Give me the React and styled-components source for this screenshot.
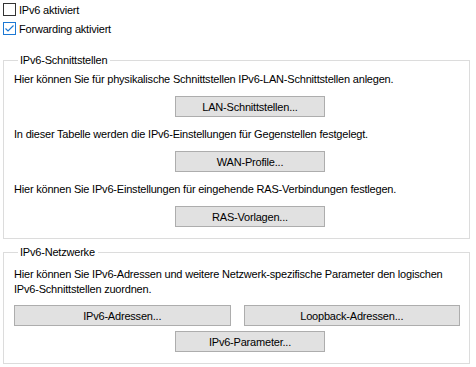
import React, { useState } from "react";
import styled, { createGlobalStyle } from "styled-components";

const GlobalStyle = createGlobalStyle`
  html, body {
    margin: 0;
    padding: 0;
    background: #ffffff;
  }
  body {
    font-family: "Liberation Sans", Arial, sans-serif;
    font-size: 11px;
    letter-spacing: -0.2px;
    color: #000000;
  }
`;

function CheckBox({ checked, onToggle, children }) {
  return (
    <CheckRow onClick={onToggle}>
      <Box checked={checked}>
        {checked && (
          <svg width="11" height="11" viewBox="0 0 11 11">
            <path d="M1.5 5.5 L4 8 L9.5 2.5" fill="none" stroke="#1c78d4" strokeWidth="1.2" />
          </svg>
        )}
      </Box>
      <span>{children}</span>
    </CheckRow>
  );
}

export default function App() {
  const [ipv6, setIpv6] = useState(false);
  const [forwarding, setForwarding] = useState(true);

  return (
    <Page>
      <GlobalStyle />
      <Checks>
        <CheckBox checked={ipv6} onToggle={() => setIpv6(!ipv6)}>
          IPv6 aktiviert
        </CheckBox>
        <CheckBox checked={forwarding} onToggle={() => setForwarding(!forwarding)}>
          Forwarding aktiviert
        </CheckBox>
      </Checks>

      <Group>
        <Legend>IPv6-Schnittstellen</Legend>
        <Text>Hier können Sie für physikalische Schnittstellen IPv6-LAN-Schnittstellen anlegen.</Text>
        <ButtonRow>
          <Button>LAN-Schnittstellen...</Button>
        </ButtonRow>
        <Text>In dieser Tabelle werden die IPv6-Einstellungen für Gegenstellen festgelegt.</Text>
        <ButtonRow>
          <Button>WAN-Profile...</Button>
        </ButtonRow>
        <Text>Hier können Sie IPv6-Einstellungen für eingehende RAS-Verbindungen festlegen.</Text>
        <ButtonRow last>
          <Button>RAS-Vorlagen...</Button>
        </ButtonRow>
      </Group>

      <Group second>
        <Legend>IPv6-Netzwerke</Legend>
        <Text>
          Hier können Sie IPv6-Adressen und weitere Netzwerk-spezifische Parameter den logischen
          <br />
          IPv6-Schnittstellen zuordnen.
        </Text>
        <WideRow>
          <Button wide>IPv6-Adressen...</Button>
          <Button wide>Loopback-Adressen...</Button>
        </WideRow>
        <ButtonRow tight>
          <Button>IPv6-Parameter...</Button>
        </ButtonRow>
      </Group>
    </Page>
  );
}

const Page = styled.div`
  width: 476px;
  height: 367px;
  padding: 3px 6px 0 3px;
  box-sizing: border-box;
  display: flex;
  flex-direction: column;
`;

const Checks = styled.div`
  display: flex;
  flex-direction: column;
  gap: 6px;
`;

const CheckRow = styled.label`
  display: flex;
  align-items: center;
  gap: 3px;
  height: 13px;
  cursor: default;
  user-select: none;
`;

const Box = styled.span`
  width: 13px;
  height: 13px;
  box-sizing: border-box;
  border: 1px solid ${(p) => (p.checked ? "#1c78d4" : "#333333")};
  background: #ffffff;
  display: flex;
  align-items: center;
  justify-content: center;
`;

const Group = styled.fieldset`
  margin: ${(p) => (p.second ? "7px 0 0" : "19px 0 0")};
  padding: ${(p) => (p.second ? "8px 9px 11px 10px" : "5px 9px 11px 10px")};
  border: 1px solid #dcdcdc;
  min-width: 0;
  display: flex;
  flex-direction: column;
`;

const Legend = styled.legend`
  padding: 0 3px 0 2px;
  margin-left: 4px;
  line-height: 13px;
`;

const Text = styled.p`
  margin: 0;
  line-height: 15px;
`;

const ButtonRow = styled.div`
  display: flex;
  padding-left: 161px;
  margin: ${(p) => (p.tight ? "5px 0 0" : p.last ? "9px 0 0" : "9px 0 10px")};
`;

const WideRow = styled.div`
  display: flex;
  gap: 13px;
  margin-top: 8px;
`;

const Button = styled.button`
  width: ${(p) => (p.wide ? "217px" : "150px")};
  height: 21px;
  padding: 0;
  margin: 0;
  border: 1px solid #adadad;
  background: #e1e1e1;
  font-family: "Liberation Sans", Arial, sans-serif;
  font-size: 11px;
  letter-spacing: -0.2px;
  color: #000000;
  box-sizing: border-box;
`;
